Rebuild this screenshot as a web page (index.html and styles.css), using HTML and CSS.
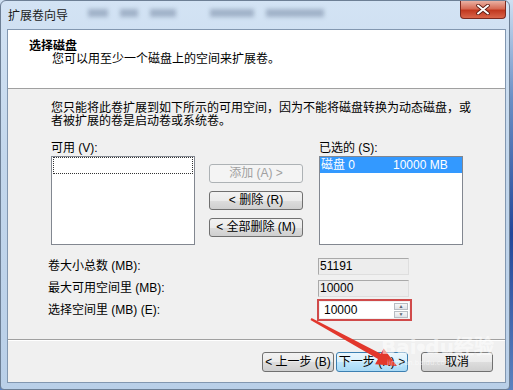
FILE: index.html
```html
<!DOCTYPE html>
<html lang="zh-CN">
<head>
<meta charset="UTF-8">
<title>扩展卷向导</title>
<link rel="stylesheet" href="styles.css">
</head>
<body>

<div class="window">
    <div class="titlebar">
        <span class="title">扩展卷向导</span>
        <div class="glass">
            <span class="smudge w20"></span>
            <span class="smudge w18"></span>
            <span class="smudge w26"></span>
            <span class="smudge w44 gap"></span>
            <span class="smudge w58"></span>
        </div>
        <div class="close">
            <svg width="14" height="11" viewBox="0 0 14 11">
                <path d="M2 1.5 L12 9.5 M12 1.5 L2 9.5" stroke="#5a1a12" stroke-width="3.6" stroke-linecap="round"/>
                <path d="M2 1.5 L12 9.5 M12 1.5 L2 9.5" stroke="#ffffff" stroke-width="2" stroke-linecap="round"/>
            </svg>
        </div>
    </div>

    <div class="client">
        <div class="header">
            <div class="h-title">选择磁盘</div>
            <div class="h-sub">您可以用至少一个磁盘上的空间来扩展卷。</div>
        </div>

        <div class="content">
            <p class="desc">您只能将此卷扩展到如下所示的可用空间，因为不能将磁盘转换为动态磁盘，或<br>者被扩展的卷是启动卷或系统卷。</p>

            <div class="picker">
                <div class="col">
                    <div class="lbl">可用 (V):</div>
                    <div class="listbox">
                        <div class="focus-row"></div>
                    </div>
                </div>
                <div class="btns">
                    <div class="btn disabled">添加 (A) &gt;</div>
                    <div class="btn">&lt; 删除 (R)</div>
                    <div class="btn">&lt; 全部删除 (M)</div>
                </div>
                <div class="col right">
                    <div class="lbl">已选的 (S):</div>
                    <div class="listbox">
                        <div class="item selected"><span class="disk">磁盘 0</span><span>10000 MB</span></div>
                    </div>
                </div>
            </div>

            <div class="sizes">
                <div class="row">
                    <span>卷大小总数 (MB):</span>
                    <div class="field readonly">51191</div>
                </div>
                <div class="row">
                    <span>最大可用空间里 (MB):</span>
                    <div class="field readonly">10000</div>
                </div>
                <div class="row">
                    <span>选择空间里 (MB) (E):</span>
                    <div class="mark">
                        <div class="field spin">
                            <span>10000</span>
                            <div class="spinners">
                                <div class="arrow">▲</div>
                                <div class="arrow">▼</div>
                            </div>
                        </div>
                    </div>
                </div>
            </div>
        </div>

        <div class="footer">
            <div class="btn wide">&lt; 上一步 (B)</div>
            <div class="btn wide default">下一步 (N) &gt;</div>
            <div class="btn wide cancel">取消</div>
        </div>
    </div>

    <svg class="arrow-note" width="513" height="390" viewBox="0 0 513 390">
        <polygon points="311.5,318.1 380.8,353.8 383.7,348.5 397,366 375.1,364.3 378,359 310.5,319.9" fill="#e2372c"/>
    </svg>

    <div class="watermark">
        <div class="wm-logo">Bai<span class="paw">●</span>du经验</div>
        <div class="wm-url">jingyan.baidu.com</div>
    </div>
</div>

</body>
</html>
```

FILE: styles.css
```css
body {
    margin: 0;
    width: 513px;
    height: 390px;
    overflow: hidden;
    background: linear-gradient(to bottom, #cfe0f2 0%, #6b8fc6 25%, #24479a 60%, #5c82bf 100%);
    font-family: "Liberation Sans", "Noto Sans CJK SC", sans-serif;
    font-size: 12px;
    line-height: 13px;
    color: #000;
}
.window {
    position: relative;
    box-sizing: border-box;
    width: 510px;
    height: 390px;
    border: 1px solid #6d7f95;
    border-radius: 6px 6px 4px 4px;
    padding: 0 3px 6px 6px;
    background: linear-gradient(to bottom, #d3e3f4 0%, #c3d7ec 40%, #b9cfe8 100%);
    display: flex;
    flex-direction: column;
}
.titlebar {
    height: 28px;
    display: flex;
    align-items: flex-start;
}
.title {
    margin-top: 9px;
    padding-left: 1px;
    width: 80px;
    color: #1b1b1b;
}
.glass {
    display: flex;
    margin-top: 8px;
    flex: 1;
}
.smudge {
    height: 8px;
    margin-right: 12px;
    background: rgba(70, 90, 120, 0.35);
    filter: blur(2px);
}
.w20 { width: 20px; }
.w18 { width: 18px; }
.w26 { width: 26px; }
.w44 { width: 44px; }
.w58 { width: 58px; }
.gap { margin-left: 22px; }
.close {
    width: 46px;
    height: 18px;
    box-sizing: border-box;
    border: 1px solid #7b2a20;
    border-top: none;
    border-radius: 0 0 4px 4px;
    background: linear-gradient(to bottom, #eab1a3 0%, #d66b55 45%, #c1381f 55%, #d9654a 100%);
    display: flex;
    align-items: center;
    justify-content: center;
}
.client {
    width: 499px;
    height: 354px;
    box-sizing: border-box;
    border: 1px solid #8297b0;
    background: #f0f0f0;
    display: flex;
    flex-direction: column;
}
.header {
    height: 59px;
    box-sizing: border-box;
    background: #fff;
    border-bottom: 1px solid #a0a0a0;
    padding-top: 10px;
}
.h-title {
    padding-left: 21px;
    font-weight: bold;
}
.h-sub {
    padding-left: 44px;
}
.content {
    height: 250px;
    box-sizing: border-box;
    padding: 13px 0 0 40px;
}
.desc {
    margin: 0 0 0 3px;
}
.picker {
    display: flex;
    align-items: flex-start;
    margin: 14px 0 0 3px;
}
.col {
    width: 144px;
}
.col.right {
    margin-left: 16px;
}
.lbl {
    margin-bottom: 1px;
}
.listbox {
    height: 89px;
    box-sizing: border-box;
    border: 1px solid #828790;
    background: #fff;
}
.focus-row {
    height: 17px;
    margin: 0 1px;
    box-sizing: border-box;
    border: 1px dotted #333;
}
.item {
    height: 16px;
    line-height: 16px;
    padding-left: 1px;
    display: flex;
}
.item.selected {
    background: #3399ff;
    color: #fff;
}
.disk {
    width: 72px;
}
.btns {
    width: 94px;
    margin: 22px 0 0 14px;
    display: flex;
    flex-direction: column;
    gap: 8px;
}
.btn {
    height: 19px;
    box-sizing: border-box;
    border: 1px solid #707070;
    border-radius: 3px;
    background: linear-gradient(to bottom, #f2f2f2 0%, #ebebeb 50%, #dddddd 51%, #cfcfcf 100%);
    display: flex;
    align-items: center;
    justify-content: center;
    white-space: nowrap;
}
.btn.disabled {
    border-color: #adb2b5;
    background: #f4f4f4;
    color: #a0a0a0;
}
.sizes {
    margin-top: 10px;
}
.row {
    height: 22px;
    display: grid;
    grid-template-columns: 270px 95px;
    align-items: center;
}
.field {
    box-sizing: border-box;
    width: 91px;
    height: 17px;
    line-height: 15px;
    padding-left: 1px;
}
.readonly {
    border: 1px solid;
    border-color: #a9a9a9 #dedede #dedede #a9a9a9;
    background: #ededed;
}
.mark {
    margin-left: -1px;
    width: 95px;
    height: 22px;
    box-sizing: border-box;
    border: 2px solid #d04a4a;
    padding: 1px;
}
.field.spin {
    width: 89px;
    height: 16px;
    background: #fff;
    display: flex;
    justify-content: space-between;
    align-items: center;
    padding-left: 4px;
}
.spinners {
    display: flex;
    flex-direction: column;
    gap: 1px;
    margin-right: 1px;
}
.arrow {
    width: 14px;
    height: 7px;
    box-sizing: border-box;
    border: 1px solid #b7bcc2;
    background: linear-gradient(to bottom, #f7f7f7, #dfe3e8);
    font-size: 5px;
    line-height: 5px;
    text-align: center;
    color: #5b6470;
}
.footer {
    flex: 1;
    border-top: 1px solid #a0a0a0;
    box-shadow: inset 0 1px 0 #fff;
    display: flex;
    justify-content: flex-end;
    align-items: flex-start;
    padding: 12px 12px 0 0;
    gap: 2px;
}
.btn.wide {
    width: 72px;
    height: 20px;
}
.btn.default {
    border-color: #3c7fb1;
    background: linear-gradient(to bottom, #eaf6fd 0%, #d9f0fc 50%, #bee6fd 51%, #a7d9f5 100%);
}
.btn.cancel {
    margin-left: 11px;
}
.arrow-note {
    position: absolute;
    left: -1px;
    top: -1px;
    pointer-events: none;
}
.watermark {
    position: absolute;
    left: 380px;
    top: 334px;
    color: rgba(255, 255, 255, 0.55);
    font-family: "DejaVu Sans", sans-serif;
}
.wm-logo {
    font-size: 20px;
    line-height: 24px;
    font-weight: bold;
}
.paw {
    font-size: 10px;
    vertical-align: top;
}
.wm-url {
    font-size: 7px;
    line-height: 8px;
    margin-left: 6px;
}
```
